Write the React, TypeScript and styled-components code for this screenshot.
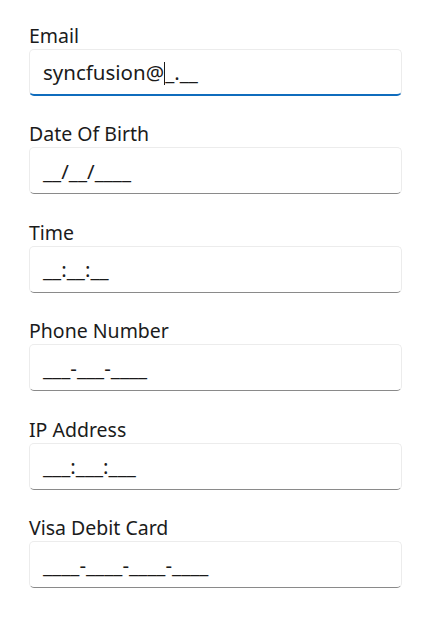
import React from 'react';
import styled, { createGlobalStyle } from 'styled-components';

const GlobalStyle = createGlobalStyle`
  body {
    margin: 0;
    background: #ffffff;
    font-family: "Noto Sans", "Open Sans", sans-serif;
  }
`;

const Page = styled.div`
  display: flex;
  flex-direction: column;
  gap: 26.5px;
  padding: 23.5px 35px 0 29px;
`;

const Field = styled.div`
  display: flex;
  flex-direction: column;
  gap: 1px;
`;

const Label = styled.label`
  font-size: 19.5px;
  line-height: 24px;
  color: #1b1b1b;
`;

const Box = styled.div<{ $focused?: boolean }>`
  height: 47px;
  box-sizing: border-box;
  border: 1px solid #ececec;
  border-bottom: ${p => (p.$focused ? '2px solid #0f6cbd' : '1px solid #8a8a8a')};
  border-radius: 5px;
  background: #fff;
  display: flex;
  align-items: center;
  padding: 0 13px;
  font-size: 20.5px;
  color: #1b1b1b;
`;

const Caret = styled.span`
  display: inline-block;
  width: 1px;
  height: 23px;
  background: #1b1b1b;
  vertical-align: -5px;
`;

const fields = [
  { label: 'Date Of Birth', mask: '__/__/____' },
  { label: 'Time', mask: '__:__:__' },
  { label: 'Phone Number', mask: '___-___-____' },
  { label: 'IP Address', mask: '___:___:___' },
  { label: 'Visa Debit Card', mask: '____-____-____-____' },
];

export default function App() {
  return (
    <>
      <GlobalStyle />
      <Page>
        <Field>
          <Label>Email</Label>
          <Box $focused>
            <span>syncfusion@<Caret />_.__</span>
          </Box>
        </Field>
        {fields.map(f => (
          <Field key={f.label}>
            <Label>{f.label}</Label>
            <Box>{f.mask}</Box>
          </Field>
        ))}
      </Page>
    </>
  );
}
